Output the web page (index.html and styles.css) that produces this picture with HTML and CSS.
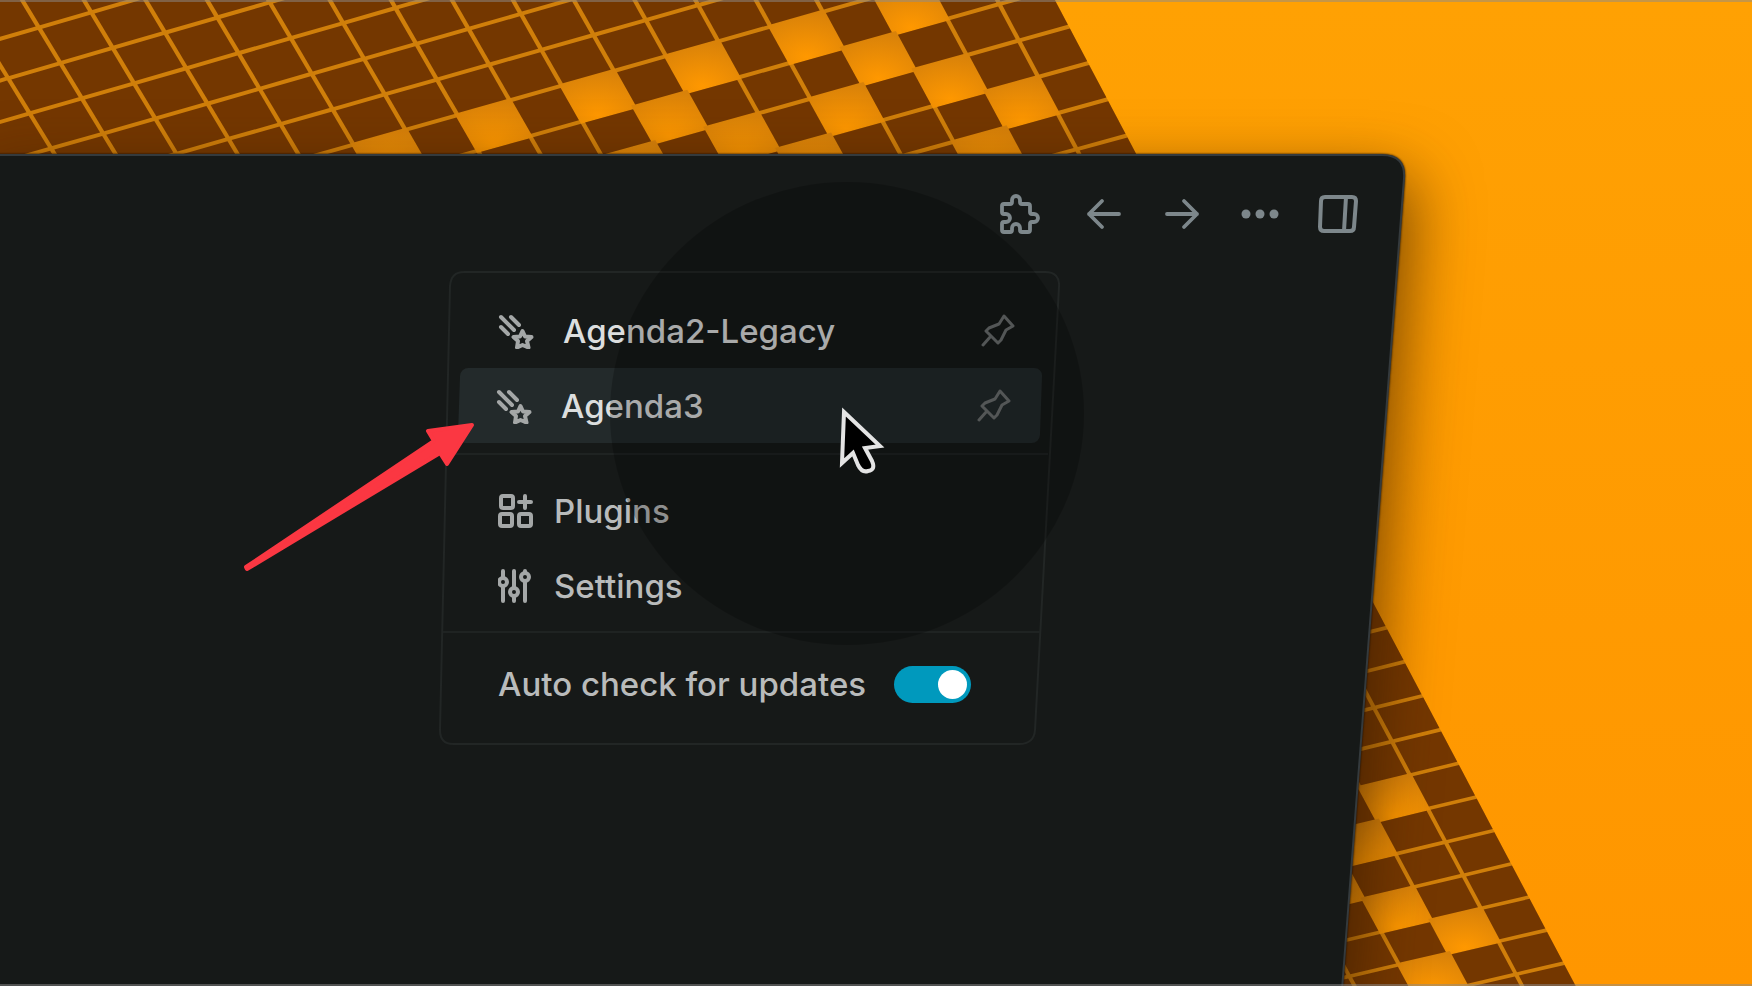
FILE: index.html
```html
<!DOCTYPE html>
<html lang="en">
<head>
<meta charset="utf-8">
<title>Agenda3</title>
<link rel="stylesheet" href="styles.css">
</head>
<body>
<svg class="wallpaper" viewBox="0 0 1752 986" preserveAspectRatio="xMidYMid slice" aria-hidden="true">
  <defs>
    <linearGradient id="sky" x1="0" y1="0" x2="0" y2="1">
      <stop offset="0" stop-color="#ffa103"/>
      <stop offset="1" stop-color="#ff9600"/>
    </linearGradient>
    <radialGradient id="glow" cx=".5" cy=".85" r=".8">
      <stop offset="0" stop-color="#ff9800"/>
      <stop offset="1" stop-color="#d98209"/>
    </radialGradient>
  </defs>
  <rect width="1752" height="986" fill="url(#sky)"/>
  <g id="tiles"></g>
</svg>

<main class="window">
  <svg class="frame" viewBox="0 0 1406 833" preserveAspectRatio="none" aria-hidden="true">
    <path class="frame-shape" d="M-20 2H1382Q1406 2 1404 26L1341 850H-20Z"/>
  </svg>

  <nav class="toolbar" aria-label="Window">
    <button class="tool tool-wide" aria-label="Plugins menu">
      <svg viewBox="2 2 20 20"><path d="M4 7h3a1 1 0 0 0 1-1v-1a2 2 0 0 1 4 0v1a1 1 0 0 0 1 1h3a1 1 0 0 1 1 1v3a1 1 0 0 0 1 1h1a2 2 0 0 1 0 4h-1a1 1 0 0 0-1 1v3a1 1 0 0 1-1 1h-3a1 1 0 0 1-1-1v-1a2 2 0 0 0-4 0v1a1 1 0 0 1-1 1h-3a1 1 0 0 1-1-1v-3a1 1 0 0 1 1-1h1a2 2 0 0 0 0-4h-1a1 1 0 0 1-1-1v-3a1 1 0 0 1 1-1"/></svg>
    </button>
    <button class="tool" aria-label="Back">
      <svg viewBox="2 2 20 20"><path d="M19.500 12H4.500M11 5.500L4.500 12L11 18.500"/></svg>
    </button>
    <button class="tool" aria-label="Forward">
      <svg viewBox="2 2 20 20"><path d="M4.500 12H19.500M13 5.500L19.500 12L13 18.500"/></svg>
    </button>
    <button class="tool" aria-label="More">
      <svg class="solid" viewBox="0 0 40 40"><circle cx="6" cy="20" r="4.500"/><circle cx="20" cy="20" r="4.500"/><circle cx="34" cy="20" r="4.500"/></svg>
    </button>
    <button class="tool" aria-label="Toggle right sidebar">
      <svg class="panel-icon" viewBox="0 0 40 40"><path d="M7 3H34Q38 3 38 7L36 33Q36 37 32 37H6Q2 37 2 33L3 7Q3 3 7 3ZM28 3L26 37"/></svg>
    </button>
  </nav>

  <section class="menu" aria-label="Plugins">
    <svg class="menu-frame" viewBox="0 0 621 473" preserveAspectRatio="none" aria-hidden="true">
      <path d="M25 1H606Q621 1 620 16L596 458Q595 472 580 472H14Q1 472 1 458L11 15Q12 1 25 1Z"/>
    </svg>
    <div class="group group-first">
      <div class="row">
        <button class="item">
          <svg class="icon" viewBox="0 0 36 36"><path d="M3 4L16 17M13 4L21 12M3 14L10 21M24.500 18L27 23.500L33.500 24L29 28L30.500 34.500L24.500 32L19 34.500L20 28L15.500 24L22 23.500Z"/></svg>
          <span>Agenda2-Legacy</span>
        </button>
        <button class="pin" aria-label="Pin Agenda2-Legacy">
          <svg viewBox="0 0 34 34"><path d="M23 2L32 12L25 16L20 26L17 29L5 17L8 14L18 10ZM10 22L2 31"/></svg>
        </button>
      </div>
      <div class="row row-active">
        <button class="item">
          <svg class="icon" viewBox="0 0 36 36"><path d="M3 4L16 17M13 4L21 12M3 14L10 21M24.500 18L27 23.500L33.500 24L29 28L30.500 34.500L24.500 32L19 34.500L20 28L15.500 24L22 23.500Z"/></svg>
          <span>Agenda3</span>
        </button>
        <button class="pin" aria-label="Pin Agenda3">
          <svg viewBox="0 0 34 34"><path d="M23 2L32 12L25 16L20 26L17 29L5 17L8 14L18 10ZM10 22L2 31"/></svg>
        </button>
      </div>
    </div>
    <div class="group group-middle">
      <div class="row">
        <button class="item item-plain">
          <svg class="icon" viewBox="0 0 36 36"><rect x="3" y="3" width="12" height="12" rx="2"/><rect x="2" y="21" width="12" height="12" rx="2"/><rect x="21" y="21" width="12" height="12" rx="2"/><path d="M27 3V15M21 9H33"/></svg>
          <span>Plugins</span>
        </button>
      </div>
      <div class="row">
        <button class="item item-plain">
          <svg class="icon" viewBox="0 0 36 36"><path d="M5 3V10M5 18V33M16 3V20M16 28V33M27 3V5M27 13V33"/><circle cx="5" cy="14" r="4"/><circle cx="16" cy="24" r="4"/><circle cx="27" cy="9" r="4"/></svg>
          <span>Settings</span>
        </button>
      </div>
    </div>
    <div class="group group-last">
      <label class="updates" for="auto-check">Auto check for updates</label>
      <input class="switch" id="auto-check" type="checkbox" role="switch" checked>
    </div>

    <div class="spotlight"></div>
    <svg class="pointer" viewBox="0 0 50 72" aria-hidden="true"><path d="M6 7L42 41L27 43L34 56Q38 65 30 66Q24 68 20 60L15 48L4 58Z"/></svg>
    <svg class="callout" viewBox="0 0 234 150" aria-hidden="true"><path d="M3 145L191 19L185 9L229 3L204 42L197 31L4 147Z"/></svg>
  </section>
</main>
<script src="tiles.js"></script>
</body>
</html>
```
FILE: styles.css
```css
* {
  box-sizing: border-box;
}

body {
  margin: 0;
  min-height: 100vh;
  overflow: hidden;
  position: relative;
  background: #ff9a00;
  font-family: Inter, "Liberation Sans", sans-serif;
  color: #b9bbbb;
}

body::before,
body::after {
  content: "";
  position: absolute;
  z-index: 5;
  left: 0;
  right: 0;
  height: 2px;
  background: rgba(140, 140, 140, 0.5);
}

body::before {
  top: 0;
}

body::after {
  bottom: 0;
}

button {
  margin: 0;
  padding: 0;
  border: 0;
  background: none;
  font: inherit;
  color: inherit;
}

svg {
  display: block;
  fill: none;
  stroke: currentColor;
  stroke-linecap: round;
  stroke-linejoin: round;
}

.wallpaper {
  position: absolute;
  inset: 0;
  width: 100%;
  height: 100%;
  stroke: none;
}

.tile {
  fill: #743700;
}

.tile-bed {
  fill: #d07f0a;
}

.tile-lit {
  fill: url(#glow);
}

.window {
  position: relative;
  width: 80.25%;
  min-height: calc(100vh - 153px);
  margin-top: 153px;
}

.frame {
  position: absolute;
  inset: 0;
  width: 100%;
  height: 100%;
  overflow: visible;
  filter: drop-shadow(0 0 1px #1a0c00) drop-shadow(8px 22px 32px rgba(50, 25, 0, 0.65));
}

.frame-shape {
  fill: #161918;
  stroke: #343a3d;
  stroke-width: 2;
}

.toolbar {
  position: relative;
  display: flex;
  justify-content: flex-end;
  gap: 38px;
  padding: 41px 48px 0;
  color: #7d878b;
}

.tool {
  width: 40px;
  height: 40px;
}

.tool-wide {
  margin-right: 6px;
}

.tool svg {
  width: 40px;
  height: 40px;
  stroke-width: 1.9;
}

.tool .solid {
  fill: currentColor;
  stroke: none;
}

.tool .panel-icon {
  stroke-width: 4;
}

.menu {
  position: relative;
  width: 621px;
  margin: 37px 0 0 439px;
  font-size: 33px;
  line-height: 40px;
  font-weight: 500;
}

.menu-frame {
  position: absolute;
  inset: 0;
  width: 100%;
  height: 100%;
  stroke: #222625;
  stroke-width: 2;
}

.group {
  position: relative;
}

.group-first {
  padding: 22px 0 10px;
  color: #dcdede;
}

.group-middle {
  padding: 20px 0 8px;
}

.group-last {
  display: flex;
  align-items: center;
  gap: 28px;
  padding: 33px 0 41px 59px;
}

.group-middle::before,
.group-last::before {
  content: "";
  position: absolute;
  top: 0;
  left: 6px;
  right: 12px;
  height: 2px;
  background: #1f2322;
}

.group-last::before {
  left: 4px;
  right: 20px;
}

.row {
  position: relative;
  display: flex;
  align-items: center;
  justify-content: space-between;
  height: 75px;
  padding: 0 45px 0 59px;
}

.row-active {
  padding: 0 49px 0 57px;
}

.row-active::before {
  content: "";
  position: absolute;
  inset: 0 19px 0 20px;
  border-radius: 8px;
  background: #232a2b;
  transform: skewX(-2deg);
}

.item {
  position: relative;
  display: flex;
  align-items: center;
  gap: 29px;
}

.item-plain {
  gap: 20px;
}

.icon {
  width: 36px;
  height: 36px;
  stroke: #a4a7a7;
  stroke-width: 4;
}

.pin {
  position: relative;
  color: #6c7071;
}

.pin svg {
  width: 34px;
  height: 34px;
  stroke-width: 3;
}

.switch {
  appearance: none;
  width: 77px;
  height: 37px;
  margin: 0;
  padding: 4px;
  border-radius: 19px;
  background: #0099bd;
}

.switch::before {
  content: "";
  display: block;
  width: 29px;
  height: 29px;
  margin-left: auto;
  border-radius: 50%;
  background: #fff;
}

.spotlight {
  position: absolute;
  top: -89px;
  left: 171px;
  width: 474px;
  height: 463px;
  border-radius: 50%;
  background: rgba(0, 2, 0, 0.23);
  pointer-events: none;
}

.pointer {
  position: absolute;
  top: 134px;
  left: 399px;
  width: 50px;
  height: 72px;
  fill: #000;
  stroke: #e4e4e4;
  stroke-width: 4;
  stroke-linejoin: miter;
}

.callout {
  position: absolute;
  top: 151px;
  left: -196px;
  width: 234px;
  height: 150px;
  fill: #fb3742;
  stroke: #fb3742;
  stroke-width: 4;
}
```
FILE: tiles.js
```js
// Draws the tiled floor of the wallpaper in perspective.
// Columns count leftwards from the floor's right edge, rows count downwards.
const SVG = "http://www.w3.org/2000/svg";
const floor = document.getElementById("tiles");

const lit = new Set([
  "2,-2", "4,-2", "6,-2", "8,-2", "10,-2", "12,-2", "3,-1", "7,-1",
  "2,0", "4,0", "6,0", "8,0", "1,1", "5,1", "2,2",
  "1,21", "2,22", "3,23", "2,24", "1,25", "2,26"
]);

function project(u, v) {
  const w = 1 + 0.0003 * u + 0.002 * v;
  const x = (1071 - 51.9 * u + 21.45 * v) / w;
  const y = (26 + (14.6 - 0.08 * v) * u + 36.62 * v) / w;
  return x.toFixed(1) + "," + y.toFixed(1);
}

function quad(u0, v0, u1, v1, name) {
  const shape = document.createElementNS(SVG, "polygon");
  shape.setAttribute("points", [
    project(u0, v0), project(u1, v0), project(u1, v1), project(u0, v1)
  ].join(" "));
  shape.setAttribute("class", name);
  floor.append(shape);
}

for (let v = -12; v < 30; v++) {
  quad(0.04, v, 26, v + 1.05, "tile-bed");
}
for (let v = -12; v < 30; v++) {
  for (let u = 0; u < 26; u++) {
    if (lit.has(u + "," + v)) {
      quad(u - 0.04, v - 0.05, u + 1.04, v + 1.05, "tile-lit");
    }
  }
}
for (let v = -12; v < 30; v++) {
  for (let u = 0; u < 26; u++) {
    if (!lit.has(u + "," + v)) {
      quad(u + 0.04, v + 0.05, u + 0.96, v + 0.95, "tile");
    }
  }
}
```
